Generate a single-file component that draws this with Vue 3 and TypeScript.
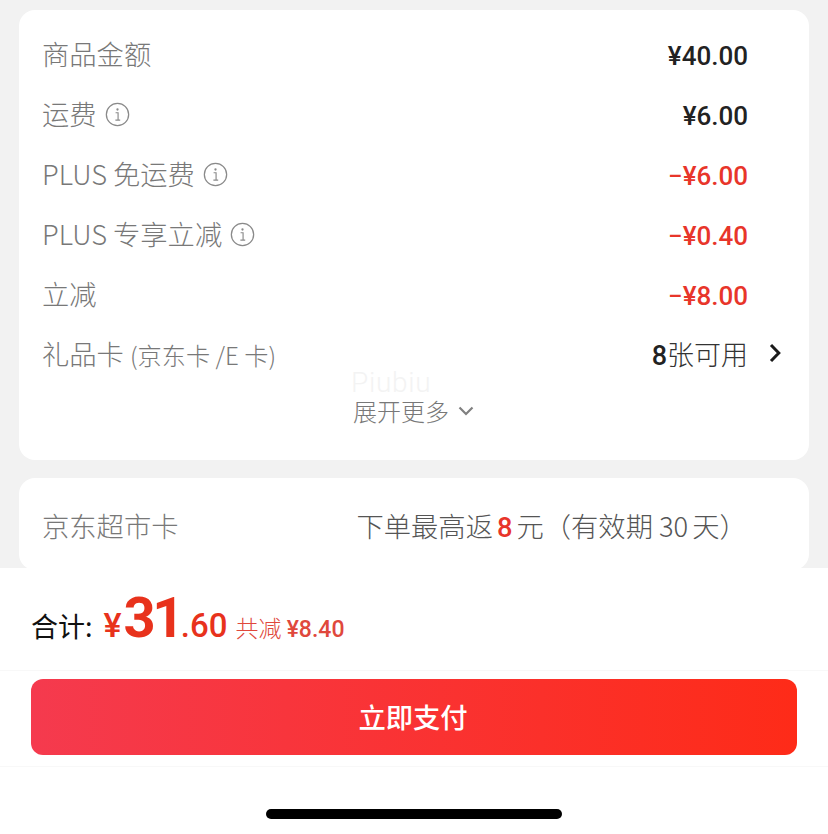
<script setup lang="ts">
interface PriceRow {
  label: string
  value: string
  info?: boolean
  red?: boolean
}

const rows: PriceRow[] = [
  { label: '商品金额', value: '¥40.00' },
  { label: '运费', value: '¥6.00', info: true },
  { label: 'PLUS 免运费', value: '−¥6.00', info: true, red: true },
  { label: 'PLUS 专享立减', value: '−¥0.40', info: true, red: true },
  { label: '立减', value: '−¥8.00', red: true },
]
</script>

<template>
  <div class="page">
    <div class="scroll">
      <section class="card summary">
        <div v-for="row in rows" :key="row.label" class="row">
          <span class="label">{{ row.label }}</span>
          <svg v-if="row.info" class="info" viewBox="0 0 26 26" fill="none">
            <circle cx="13" cy="13" r="11.6" stroke="#8a8a8a" stroke-width="1.3" />
            <circle cx="13" cy="7.8" r="1.2" fill="#8a8a8a" />
            <path d="M11 11.2h2.6v7.4M10.8 18.8h5" stroke="#8a8a8a" stroke-width="1.2" />
          </svg>
          <span class="amount" :class="{ red: row.red }">{{ row.value }}</span>
        </div>
        <div class="row">
          <span class="label">礼品卡 <small>(京东卡 /E 卡)</small></span>
          <span class="usable"><b>8</b>张可用</span>
          <svg class="arrow" viewBox="0 0 14 20" fill="none">
            <path d="M3 2L10.8 10L3 18" stroke="#1a1a1a" stroke-width="3" />
          </svg>
        </div>
        <div class="more">
          <span class="mark">Piubiu</span>
          <span class="more-text">
            展开更多
            <svg viewBox="0 0 16 10" fill="none">
              <path d="M1.5 1.5L8 8l6.5-6.5" stroke="#808080" stroke-width="2.2" />
            </svg>
          </span>
        </div>
      </section>

      <section class="card market">
        <span class="label">京东超市卡</span>
        <span class="rebate">下单最高返<b>8</b>元（有效期<span class="days">30</span>天）</span>
      </section>
    </div>

    <footer class="footer">
      <div class="total">
        <span class="total-label">合计:</span>
        <span class="yen">¥</span><span class="int">31</span><span class="dec">.60</span>
        <span class="saved">共减 <em>¥8.40</em></span>
      </div>
      <div class="action">
        <button class="pay">立即支付</button>
      </div>
      <div class="home"><i></i></div>
    </footer>
  </div>
</template>

<style>
html,
body {
  margin: 0;
  background: #fff;
}
</style>

<style scoped>
.page {
  width: 828px;
  height: 834px;
  display: flex;
  flex-direction: column;
  overflow: hidden;
  font-family: 'Noto Sans CJK SC', 'Noto Sans', sans-serif;
}
.scroll {
  height: 568px;
  flex: none;
  box-sizing: border-box;
  padding: 10px 19px 0;
  background: #f2f2f2;
  overflow: hidden;
}
.card {
  background: #fff;
  border-radius: 16px;
}
.summary {
  height: 450px;
  box-sizing: border-box;
  padding: 13px 24px 0 23px;
  margin-bottom: 18px;
}
.row {
  height: 60px;
  display: flex;
  align-items: center;
}
.label {
  font-size: 27.3px;
  font-weight: 300;
  color: #787878;
  white-space: nowrap;
}
.label small {
  font-size: 24.2px;
}
.info {
  width: 25px;
  height: 25px;
  margin: 2px 0 0 8px;
}
.amount {
  margin: 5px 37px 0 auto;
  font-family: Roboto, sans-serif;
  font-size: 26px;
  font-weight: 500;
  color: #222;
}
.amount.red {
  color: #e8352a;
}
.usable {
  margin: 0 20px 0 auto;
  font-size: 27px;
  color: #333;
  font-weight: 300;
}
.usable b {
  font-family: Roboto, sans-serif;
  font-weight: 500;
  color: #222;
}
.arrow {
  width: 14px;
  height: 20px;
  margin: 0 3px 0 0;
}
.more {
  position: relative;
  display: flex;
  justify-content: center;
  margin-top: 8px;
}
.mark {
  position: absolute;
  left: 309px;
  top: -22px;
  font-family: Roboto, sans-serif;
  font-size: 28px;
  font-weight: 300;
  line-height: 1;
  letter-spacing: 0.7px;
  color: #f3f3f3;
}
.more-text {
  display: flex;
  align-items: center;
  gap: 9px;
  margin-top: 8px;
  font-size: 24px;
  font-weight: 300;
  color: #787878;
  line-height: 24px;
}
.more-text svg {
  width: 16px;
  height: 10px;
}
.market {
  height: 92px;
  box-sizing: border-box;
  padding: 27px 24px 0 23px;
  display: flex;
  align-items: flex-start;
}
.rebate {
  margin-left: 178px;
  font-size: 27.3px;
  font-weight: 300;
  color: #555;
  white-space: nowrap;
}
.rebate b {
  font-family: Roboto, sans-serif;
  font-weight: 500;
  color: #e8352a;
  margin: 0 4px;
}
.days {
  margin: 0 4px 0 6px;
}
.footer {
  flex: 1;
  background: #fff;
  display: flex;
  flex-direction: column;
}
.total {
  height: 103px;
  box-sizing: border-box;
  padding: 0 31px;
  display: flex;
  align-items: baseline;
  border-bottom: 1px solid #f8f8f8;
  line-height: 101px;
  font-family: Roboto, 'Noto Sans CJK SC', sans-serif;
  color: #e8321c;
  white-space: nowrap;
}
.total-label {
  font-family: 'Noto Sans CJK SC', sans-serif;
  font-size: 27px;
  color: #111;
  margin-right: 11px;
}
.yen {
  font-size: 34px;
  font-weight: 500;
}
.int {
  font-size: 56px;
  font-weight: 700;
  letter-spacing: -3.5px;
  margin-left: 2px;
}
.dec {
  font-size: 33px;
  font-weight: 500;
}
.saved {
  margin-left: 8px;
  font-family: 'Noto Sans CJK SC', sans-serif;
  font-size: 23px;
  font-weight: 300;
  color: #e0483c;
}
.saved em {
  font-family: Roboto, sans-serif;
  font-style: normal;
  font-weight: 500;
}
.action {
  height: 96px;
  box-sizing: border-box;
  padding: 8px 31px 0;
  border-bottom: 1px solid #f8f8f8;
}
.pay {
  display: block;
  width: 100%;
  height: 76px;
  padding: 0 2px 3px 0;
  border: 0;
  border-radius: 12px;
  background: linear-gradient(90deg, #f53a4e, #fe2b18);
  color: #fff;
  font-family: 'Noto Sans CJK SC', sans-serif;
  font-size: 27.3px;
  font-weight: 500;
}
.home {
  flex: 1;
  display: flex;
  justify-content: center;
  padding-top: 42px;
}
.home i {
  width: 296px;
  height: 10px;
  border-radius: 5px;
  background: #000;
}
</style>
